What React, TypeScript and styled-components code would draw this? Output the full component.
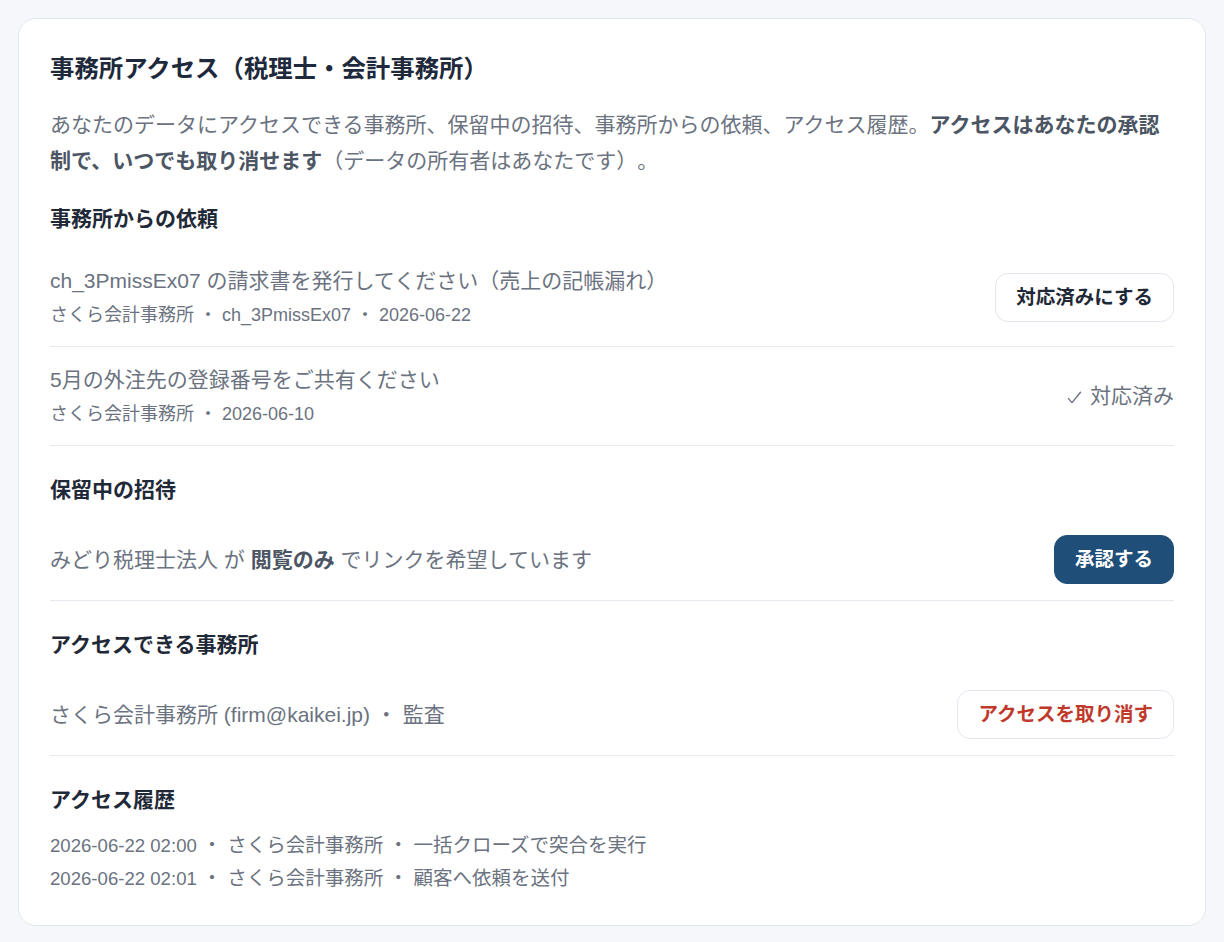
import React from 'react';
import styled, { createGlobalStyle } from 'styled-components';

const GlobalStyle = createGlobalStyle`
  html, body {
    margin: 0;
    padding: 0;
    background: #f6f7fb;
  }
  body {
    font-family: "Liberation Sans", "Noto Sans CJK JP", sans-serif;
    color: #1f2937;
    text-spacing-trim: space-all;
  }
`;

const Page = styled.div`
  padding: 18px;
`;

const Card = styled.section`
  background: #ffffff;
  border: 1px solid #e2e6ee;
  border-radius: 18px;
  padding: 31px 31px 30px;
`;

const Title = styled.h1`
  margin: 0 0 19px;
  font-size: 24.4px;
  line-height: 38px;
  font-weight: 700;
  color: #1e293b;
`;

const Description = styled.p`
  margin: 0;
  font-size: 21px;
  line-height: 36px;
  color: #6b7280;

  strong {
    color: #4b5563;
    font-weight: 700;
  }
`;

const Section = styled.div<{ $first?: boolean }>`
  margin-top: ${p => (p.$first ? '24px' : '28px')};
`;

const SectionTitle = styled.h2`
  margin: 0 0 14px;
  font-size: 21px;
  line-height: 31px;
  font-weight: 700;
  color: #1f2937;
`;

const Row = styled.div`
  display: flex;
  align-items: center;
  justify-content: space-between;
  gap: 24px;
  padding: 16px 0;
  border-bottom: 1px solid #e5e9f0;
`;

const RowBody = styled.div`
  display: flex;
  flex-direction: column;
  gap: 2px;
  min-width: 0;
`;

const RowText = styled.div`
  font-size: 21px;
  line-height: 34px;
  color: #6b7280;

  strong {
    color: #4b5563;
    font-weight: 700;
  }
`;

const Meta = styled.div`
  font-size: 18px;
  line-height: 30px;
  color: #6b7280;
`;

const Button = styled.button<{ $variant?: 'default' | 'primary' | 'danger' }>`
  flex-shrink: 0;
  font-family: inherit;
  font-size: 19.5px;
  line-height: 27px;
  font-weight: 700;
  padding: 10px 20px;
  border-radius: 13px;
  cursor: pointer;
  border: 1px solid ${p => (p.$variant === 'primary' ? '#1f4e79' : '#e2e6ee')};
  background: ${p => (p.$variant === 'primary' ? '#1f4e79' : '#ffffff')};
  color: ${p =>
    p.$variant === 'primary' ? '#ffffff' : p.$variant === 'danger' ? '#c0392b' : '#1f2937'};
`;

const DoneLabel = styled.span`
  flex-shrink: 0;
  display: inline-flex;
  align-items: center;
  gap: 8px;
  font-size: 21px;
  line-height: 34px;
  color: #6b7280;

  svg {
    margin-top: 2px;
  }
`;

const HistoryList = styled.ul`
  list-style: none;
  margin: 0;
  padding: 0;
`;

const HistoryItem = styled.li`
  font-size: 19.5px;
  line-height: 33px;
  color: #6b7280;
`;

const HistoryTime = styled.span`
  font-size: 18.6px;
`;

const CheckIcon = () => (
  <svg width="15" height="15" viewBox="0 0 15 15" fill="none">
    <path d="M1.5 8.6 L5 12.6 L13.5 2.2" stroke="#6b7280" strokeWidth="1.4" strokeLinecap="round" strokeLinejoin="round" />
  </svg>
);

const sep = ' ・ ';

const requests = [
  {
    title: 'ch_3PmissEx07 の請求書を発行してください（売上の記帳漏れ）',
    meta: ['さくら会計事務所', 'ch_3PmissEx07', '2026-06-22'],
    done: false,
  },
  {
    title: '5月の外注先の登録番号をご共有ください',
    meta: ['さくら会計事務所', '2026-06-10'],
    done: true,
  },
];

const history = [
  { at: '2026-06-22 02:00', firm: 'さくら会計事務所', action: '一括クローズで突合を実行' },
  { at: '2026-06-22 02:01', firm: 'さくら会計事務所', action: '顧客へ依頼を送付' },
];

export default function App() {
  return (
    <>
      <GlobalStyle />
      <Page>
        <Card>
          <Title>事務所アクセス（税理士・会計事務所）</Title>
          <Description>
            あなたのデータにアクセスできる事務所、保留中の招待、事務所からの依頼、アクセス履歴。
            <strong>アクセスはあなたの承認制で、いつでも取り消せます</strong>
            （データの所有者はあなたです）。
          </Description>

          <Section $first>
            <SectionTitle>事務所からの依頼</SectionTitle>
            {requests.map(r => (
              <Row key={r.title}>
                <RowBody>
                  <RowText>{r.title}</RowText>
                  <Meta>{r.meta.join(sep)}</Meta>
                </RowBody>
                {r.done ? (
                  <DoneLabel>
                    <CheckIcon />
                    対応済み
                  </DoneLabel>
                ) : (
                  <Button>対応済みにする</Button>
                )}
              </Row>
            ))}
          </Section>

          <Section>
            <SectionTitle>保留中の招待</SectionTitle>
            <Row>
              <RowText>
                みどり税理士法人 が <strong>閲覧のみ</strong> でリンクを希望しています
              </RowText>
              <Button $variant="primary">承認する</Button>
            </Row>
          </Section>

          <Section>
            <SectionTitle>アクセスできる事務所</SectionTitle>
            <Row>
              <RowText>さくら会計事務所 (firm@kaikei.jp){sep}監査</RowText>
              <Button $variant="danger">アクセスを取り消す</Button>
            </Row>
          </Section>

          <Section>
            <SectionTitle>アクセス履歴</SectionTitle>
            <HistoryList>
              {history.map(h => (
                <HistoryItem key={h.at}>
                  <HistoryTime>{h.at}</HistoryTime>
                  {sep}
                  {h.firm}
                  {sep}
                  {h.action}
                </HistoryItem>
              ))}
            </HistoryList>
          </Section>
        </Card>
      </Page>
    </>
  );
}
